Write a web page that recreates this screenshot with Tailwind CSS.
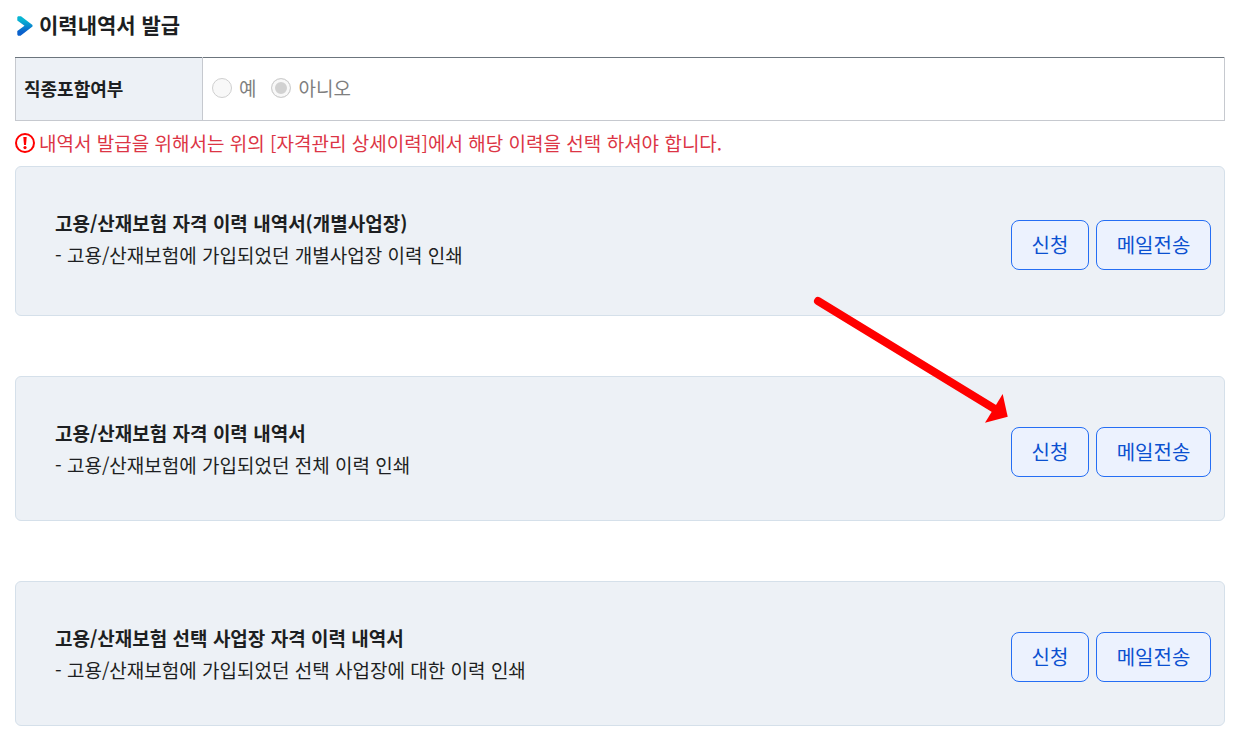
<!DOCTYPE html>
<html lang="ko">
<head>
  <meta charset="UTF-8">
  <meta name="viewport" content="width=device-width, initial-scale=1">
  <title>이력내역서 발급</title>
  <script src="https://cdn.jsdelivr.net/npm/@tailwindcss/browser@4"></script>
</head>
<body class="bg-white text-[#1d1f22] text-[19px] leading-8 font-['Noto_Sans_CJK_KR',sans-serif]">
  <main class="pl-[15px] pr-5 pt-2 pb-2">
    <h1 class="flex items-center gap-1.5 text-[21px] leading-8 font-bold">
      <svg class="w-4 h-5 ml-0.5 mt-1 shrink-0" viewBox="0 0 16 20" aria-hidden="true">
        <defs>
          <linearGradient id="chevron" x1="0" y1="0" x2="0" y2="1">
            <stop offset="0.2" stop-color="#08b4d2"/>
            <stop offset="0.8" stop-color="#0a60cc"/>
          </linearGradient>
        </defs>
        <path d="M1 0.3 L4 0.3 L15.5 9 V10.6 L3.5 19.7 H1 L0.3 18.5 V15 L7.5 9.8 L0.3 4.6 V1.2 Z" fill="url(#chevron)"/>
      </svg>
      이력내역서 발급
    </h1>

    <table class="mt-[17px] w-full h-16 border-collapse border border-[#c6c9cf] border-t-[#6c757d]">
      <tbody>
        <tr>
          <th scope="row" class="w-[187px] bg-[#edf1f6] border-r border-[#c6c9cf] px-2 pb-0.5 text-left text-[18px] font-bold">직종포함여부</th>
          <td class="px-[9px] pb-0.5 text-[#7f7f7f]">
            <div class="flex items-center gap-[15px]">
              <label class="flex items-center gap-[7px]">
                <input type="radio" name="jobType" disabled class="appearance-none size-5 rounded-full border border-[#cfcfcf] bg-[#f8f8f8]">예
              </label>
              <label class="flex items-center gap-[7px]">
                <input type="radio" name="jobType" checked disabled class="appearance-none size-5 rounded-full border border-[#cfcfcf] bg-[#d1d1d1] shadow-[inset_0_0_0_3px_#f8f8f8]">아니오
              </label>
            </div>
          </td>
        </tr>
      </tbody>
    </table>

    <p class="mt-[6px] mb-[7px] flex items-center gap-1 text-[#dc3545]">
      <svg class="size-5 shrink-0" viewBox="0 0 20 20" aria-hidden="true">
        <circle cx="10" cy="10" r="9" fill="none" stroke="#f00" stroke-width="2"/>
        <path d="M8.3 4 H11.7 L11 12 H9 Z" fill="#f00"/>
        <circle cx="10" cy="14.6" r="1.6" fill="#f00"/>
      </svg>
      내역서 발급을 위해서는 위의 [자격관리 상세이력]에서 해당 이력을 선택 하셔야 합니다.
    </p>

    <div class="flex flex-col gap-[60px]">
      <section class="flex items-start justify-between rounded-md border border-[#d5e0ea] bg-[#edf1f6] pl-[39px] pr-[13px]">
        <div class="pt-10">
          <h2 class="font-bold">고용/산재보험 자격 이력 내역서(개별사업장)</h2>
          <p>- 고용/산재보험에 가입되었던 개별사업장 이력 인쇄</p>
        </div>
        <div class="flex gap-[7px] pt-[53px] pb-[45px] text-xl text-[#0a50d0]">
          <button type="button" class="w-[78px] h-[50px] rounded-lg border border-[#256ef4] bg-[#ecf2fe]">신청</button>
          <button type="button" class="w-[115px] h-[50px] rounded-lg border border-[#256ef4] bg-[#ecf2fe]">메일전송</button>
        </div>
      </section>

      <section class="relative flex items-start justify-between rounded-md border border-[#d5e0ea] bg-[#edf1f6] pl-[39px] pr-[13px]">
        <div class="pt-10">
          <h2 class="font-bold">고용/산재보험 자격 이력 내역서</h2>
          <p>- 고용/산재보험에 가입되었던 전체 이력 인쇄</p>
        </div>
        <div class="flex gap-[7px] pt-[50px] pb-[43px] text-xl text-[#0a50d0]">
          <button type="button" class="w-[78px] h-[50px] rounded-lg border border-[#256ef4] bg-[#ecf2fe]">신청</button>
          <button type="button" class="w-[115px] h-[50px] rounded-lg border border-[#256ef4] bg-[#ecf2fe]">메일전송</button>
        </div>
        <!-- arrow pointing at the request button -->
        <svg class="absolute right-[212px] -top-[83px] w-[202px] h-[132px] pointer-events-none" viewBox="0 0 202 132" aria-hidden="true">
          <path d="M8 7 L184 114.5" stroke="#f00" stroke-width="8" stroke-linecap="round"/>
          <path d="M197.7 122.7 L192.7 100 L175 128.7 Z" fill="#f00"/>
        </svg>
      </section>

      <section class="flex items-start justify-between rounded-md border border-[#d5e0ea] bg-[#edf1f6] pl-[39px] pr-[13px]">
        <div class="pt-10">
          <h2 class="font-bold">고용/산재보험 선택 사업장 자격 이력 내역서</h2>
          <p>- 고용/산재보험에 가입되었던 선택 사업장에 대한 이력 인쇄</p>
        </div>
        <div class="flex gap-[7px] pt-[50px] pb-[43px] text-xl text-[#0a50d0]">
          <button type="button" class="w-[78px] h-[50px] rounded-lg border border-[#256ef4] bg-[#ecf2fe]">신청</button>
          <button type="button" class="w-[115px] h-[50px] rounded-lg border border-[#256ef4] bg-[#ecf2fe]">메일전송</button>
        </div>
      </section>
    </div>
  </main>
</body>
</html>
